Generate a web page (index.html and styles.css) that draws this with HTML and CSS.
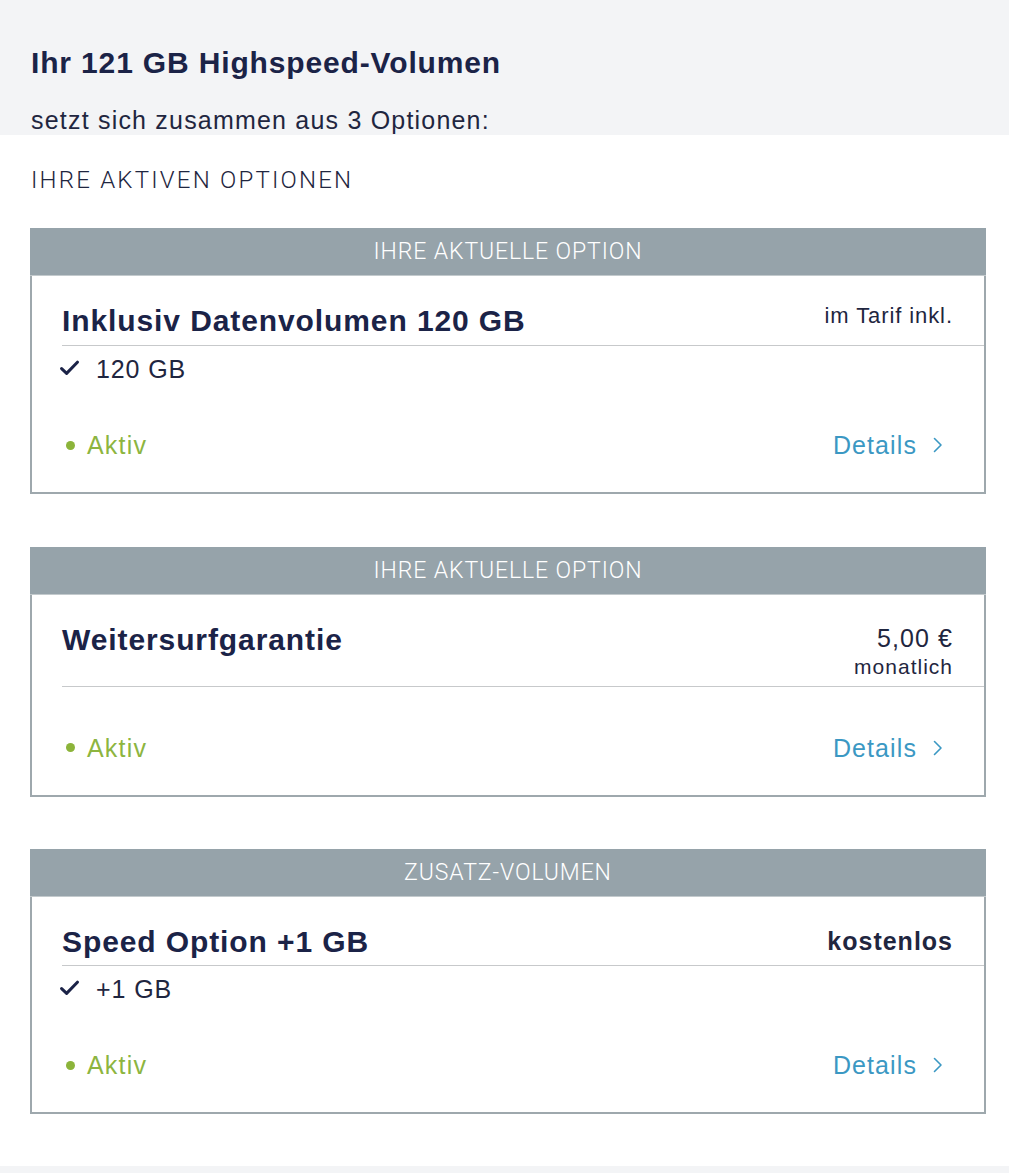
FILE: index.html
```html
<!DOCTYPE html>
<html lang="de">
<head>
<meta charset="utf-8">
<title>Highspeed-Volumen</title>
<link rel="stylesheet" href="styles.css">
</head>
<body>
<div class="intro">
  <h1 class="heading">Ihr 121 GB Highspeed-Volumen</h1>
  <p class="sub">setzt sich zusammen aus 3 Optionen:</p>
</div>
<div class="section">
  <div class="label">IHRE AKTIVEN OPTIONEN</div>
  <div class="cards">
    <div class="card">
      <div class="card-head">IHRE AKTUELLE OPTION</div>
      <div class="card-body">
        <div class="card-top">
          <div class="title">Inklusiv Datenvolumen 120 GB</div>
          <div class="price"><div class="price-note">im Tarif inkl.</div></div>
        </div>
        <div class="feature">
          <svg class="check" width="19" height="16" viewBox="0 0 19 16"><path d="M1.6 8.6 L6.6 13.4 L17.4 2.2" fill="none" stroke="#1b2347" stroke-width="3" stroke-linecap="round" stroke-linejoin="round"/></svg>
          <span>120 GB</span>
        </div>
        <div class="status">
          <div class="aktiv"><span class="dot"></span><span>Aktiv</span></div>
          <div class="details"><span>Details</span><svg class="chev" width="10" height="16" viewBox="0 0 10 16"><path d="M1.5 1.5 L8 8 L1.5 14.5" fill="none" stroke="#3b98c3" stroke-width="1.6" stroke-linecap="round" stroke-linejoin="round"/></svg></div>
        </div>
      </div>
    </div>

    <div class="card">
      <div class="card-head">IHRE AKTUELLE OPTION</div>
      <div class="card-body">
        <div class="card-top">
          <div class="title">Weitersurfgarantie</div>
          <div class="price"><div class="price-main">5,00 €</div><div class="price-sub">monatlich</div></div>
        </div>
        <div class="status">
          <div class="aktiv"><span class="dot"></span><span>Aktiv</span></div>
          <div class="details"><span>Details</span><svg class="chev" width="10" height="16" viewBox="0 0 10 16"><path d="M1.5 1.5 L8 8 L1.5 14.5" fill="none" stroke="#3b98c3" stroke-width="1.6" stroke-linecap="round" stroke-linejoin="round"/></svg></div>
        </div>
      </div>
    </div>

    <div class="card">
      <div class="card-head">ZUSATZ-VOLUMEN</div>
      <div class="card-body">
        <div class="card-top card-top-tight">
          <div class="title">Speed Option +1 GB</div>
          <div class="price"><div class="price-bold">kostenlos</div></div>
        </div>
        <div class="feature">
          <svg class="check" width="19" height="16" viewBox="0 0 19 16"><path d="M1.6 8.6 L6.6 13.4 L17.4 2.2" fill="none" stroke="#1b2347" stroke-width="3" stroke-linecap="round" stroke-linejoin="round"/></svg>
          <span>+1 GB</span>
        </div>
        <div class="status">
          <div class="aktiv"><span class="dot"></span><span>Aktiv</span></div>
          <div class="details"><span>Details</span><svg class="chev" width="10" height="16" viewBox="0 0 10 16"><path d="M1.5 1.5 L8 8 L1.5 14.5" fill="none" stroke="#3b98c3" stroke-width="1.6" stroke-linecap="round" stroke-linejoin="round"/></svg></div>
        </div>
      </div>
    </div>
  </div>
</div>
<div class="footer"></div>
</body>
</html>
```

FILE: styles.css
```css
* { box-sizing: border-box; }
html, body { margin: 0; padding: 0; background: #ffffff; }
body {
  font-family: "Liberation Sans", Arial, sans-serif;
  color: #1b2347;
}
.intro {
  background: #f3f4f6;
  padding: 46px 31px 0;
}
.heading {
  margin: 0;
  font-size: 30px;
  line-height: 34px;
  font-weight: 700;
  letter-spacing: 0.85px;
  color: #1b2347;
}
.sub {
  margin: 25px 0 0;
  font-size: 25px;
  line-height: 30px;
  letter-spacing: 1.2px;
  color: #1f2640;
}
.section {
  padding: 31px 23px 52px 30px;
}
.label {
  padding-left: 1px;
  font-family: "Roboto", "Liberation Sans", sans-serif;
  font-weight: 300;
  font-size: 24px;
  line-height: 28px;
  letter-spacing: 2.2px;
  color: #1f2640;
}
.cards {
  margin-top: 34px;
  display: flex;
  flex-direction: column;
  gap: 52.5px;
}
.card-head {
  height: 48px;
  background: #96a3aa;
  border-bottom: 1px solid #c3cacd;
  color: #ffffff;
  text-align: center;
  font-family: "Roboto", "Liberation Sans", sans-serif;
  font-weight: 300;
  font-size: 23px;
  line-height: 47px;
  letter-spacing: 0.9px;
}
.card-body {
  border: 2px solid #9ea8ad;
  border-top: 0;
  padding-bottom: 32px;
}
.card-top {
  display: flex;
  justify-content: space-between;
  align-items: flex-start;
  margin-left: 30px;
  padding: 28px 32px 7px 0;
  border-bottom: 1px solid #c7c9cb;
}
.card-top-tight { padding-bottom: 6px; }
.title {
  font-size: 30px;
  line-height: 34px;
  font-weight: 700;
  letter-spacing: 0.9px;
  color: #1b2347;
}
.price {
  text-align: right;
  color: #1f2640;
}
.price-note {
  font-size: 22px;
  line-height: 24px;
  letter-spacing: 0.9px;
  margin-right: -0.9px;
}
.price-main {
  font-size: 25px;
  line-height: 31px;
  letter-spacing: 1.1px;
  margin-right: -1.1px;
}
.price-sub {
  font-size: 21px;
  line-height: 25px;
  letter-spacing: 1px;
  margin-right: -1px;
}
.price-bold {
  font-size: 25px;
  line-height: 33px;
  font-weight: 700;
  letter-spacing: 1px;
  margin-right: -1px;
}
.feature {
  display: flex;
  align-items: center;
  margin: 8px 0 0 28px;
  font-size: 25px;
  line-height: 30px;
  letter-spacing: 0.9px;
  color: #1f2640;
}
.check { margin-right: 17px; margin-top: -3px; }
.status {
  display: flex;
  justify-content: space-between;
  align-items: center;
  margin-top: 46px;
  padding: 0 41px 0 34px;
  font-size: 25px;
  line-height: 30px;
}
.aktiv {
  display: flex;
  align-items: center;
  color: #8db53f;
  letter-spacing: 1.2px;
}
.dot {
  width: 9px;
  height: 9px;
  border-radius: 50%;
  background: #8cb43a;
  margin-right: 12px;
}
.details {
  display: flex;
  align-items: center;
  color: #3b98c3;
  letter-spacing: 1.1px;
}
.chev { margin-left: 16px; }
.footer {
  background: #f3f4f6;
  height: 20px;
}
```
